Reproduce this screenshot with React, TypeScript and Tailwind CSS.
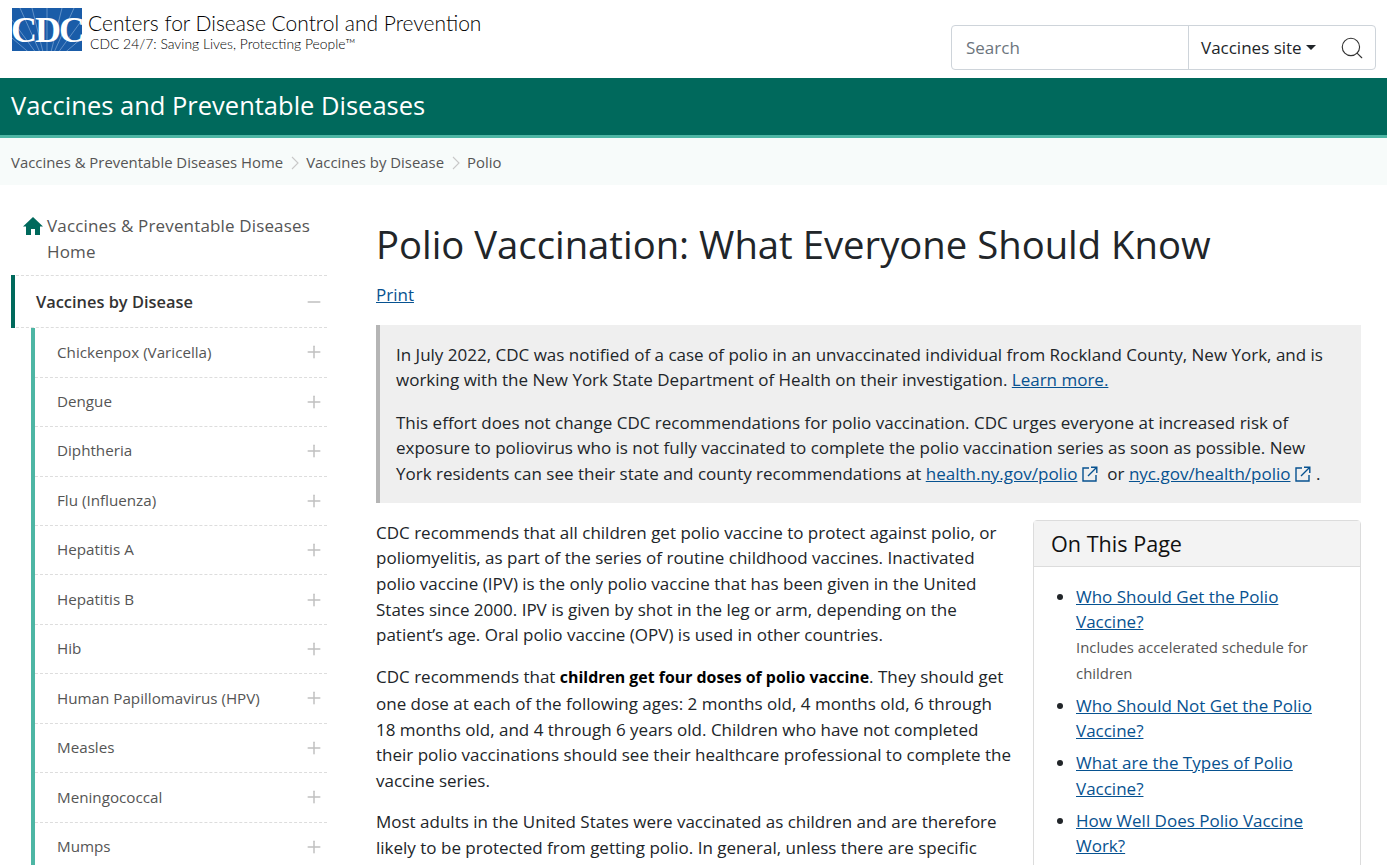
import React from 'react';
import { Search, Plus, Minus } from 'lucide-react';

const diseases = [
  'Chickenpox (Varicella)',
  'Dengue',
  'Diphtheria',
  'Flu (Influenza)',
  'Hepatitis A',
  'Hepatitis B',
  'Hib',
  'Human Papillomavirus (HPV)',
  'Measles',
  'Meningococcal',
  'Mumps',
];

const CdcLogo = () => (
  <div className="relative w-[70px] h-[43px] bg-[#1a5ca8] overflow-hidden shrink-0">
    <svg className="absolute inset-0" width="70" height="43" viewBox="0 0 70 43">
      <g stroke="#7fa8d6" strokeWidth="0.7">
        <path d="M35 60 L0 12 M35 60 L8 0 M35 60 L20 0 M35 60 L35 0 M35 60 L50 0 M35 60 L62 0 M35 60 L70 12 M35 60 L0 30 M35 60 L70 30" />
      </g>
    </svg>
    <span className="absolute inset-0 flex items-center justify-center text-white font-bold text-[36px] tracking-[-2px] font-['Liberation_Serif',serif] leading-none">
      CDC
    </span>
  </div>
);

const Ext = () => (
  <svg className="inline w-[16px] h-[16px] ml-[5px] mb-[3px]" viewBox="0 0 16 16" fill="none" stroke="#075290" strokeWidth="1.4">
    <path d="M7 2 H1 V15 H14 V9" />
    <path d="M6 10 L14.5 1.5 M9 1.2 H14.8 V7" />
  </svg>
);

const Crumb = () => (
  <svg className="w-[8px] h-[14px] mx-[7.5px] shrink-0" viewBox="0 0 8 14" fill="none" stroke="#c8c8c8" strokeWidth="1.1">
    <path d="M1 1 L7 7 L1 13" />
  </svg>
);

const A = ({ children }: { children: React.ReactNode }) => (
  <a className="text-[#075290] underline">{children}</a>
);

export default function App() {
  return (
    <div className="h-[865px] overflow-hidden bg-white font-['Open_Sans',sans-serif] text-[17px] leading-[25.6px] text-[#212529]">
      <header className="h-[78px] flex items-start justify-between pl-3 pr-[11px]">
        <div className="flex items-start gap-[6px] pt-2">
          <CdcLogo />
          <div className="font-['Lato',sans-serif] font-light text-black">
            <div className="text-[21px] leading-[30px] whitespace-nowrap">Centers for Disease Control and Prevention</div>
            <div className="text-[13.9px] leading-[11px] pl-[2px] whitespace-nowrap">CDC 24/7: Saving Lives, Protecting People™</div>
          </div>
        </div>
        <div className="mt-[25px] flex w-[425px] h-[45px] border border-[#ced4da] rounded-[4px]">
          <div className="w-[237px] border-r border-[#ced4da] pl-[14px] flex items-center text-[#6c757d]">Search</div>
          <div className="flex-1 flex items-center pl-3">
            <span>Vaccines site</span>
            <span className="ml-[4px] w-0 h-0 border-x-[5px] border-x-transparent border-t-[5px] border-t-[#212529]" />
            <Search className="ml-auto mr-[10px] w-[26px] h-[26px] text-[#333]" strokeWidth={1.05} />
          </div>
        </div>
      </header>

      <div className="h-[60px] bg-[#00695c] border-b-[3px] border-[#4db6a4] pl-[11px] pb-[1px] flex items-center text-white text-[25.5px]">
        Vaccines and Preventable Diseases
      </div>

      <nav className="h-[47px] bg-[#f7fbfa] pl-[11px] pt-[2px] flex items-center text-[14.9px] text-[#555]">
        <span>Vaccines &amp; Preventable Diseases Home</span>
        <Crumb />
        <span>Vaccines by Disease</span>
        <Crumb />
        <span>Polio</span>
      </nav>

      <div className="flex pl-[11px] pr-[26px] pt-[28px] gap-[49px]">
        <aside className="w-[316px] shrink-0">
          <div className="flex pl-3 pb-[11px] text-[#555] tracking-[0.15px]">
            <svg className="w-[20px] h-[18px] mt-[4px] mr-[4px] shrink-0" viewBox="0 0 20 18" fill="#00695c">
              <path d="M10 0 L20 9.5 L17 9.5 L17 18 L12 18 L12 12 L8 12 L8 18 L3 18 L3 9.5 L0 9.5 Z" />
            </svg>
            <span>Vaccines &amp; Preventable Diseases Home</span>
          </div>
          <div className="h-[53px] border-t border-b border-dashed border-[#ddd] flex items-center justify-between pr-[3px] relative pl-[25px]">
            <span className="absolute left-0 -top-px -bottom-px w-1 bg-[#00695c]" />
            <span className="font-semibold text-[16.4px] text-[#333]">Vaccines by Disease</span>
            <Minus className="w-5 h-5 text-[#c0c0c0]" strokeWidth={1.8} />
          </div>
          <ul className="ml-5 border-l-[4px] border-[#4db6a4]">
            {diseases.map(d => (
              <li key={d} className="h-[49.45px] border-b border-dashed border-[#ddd] flex items-center justify-between pl-[22px] pr-[3px] text-[15.2px] text-[#555]">
                <span>{d}</span>
                <Plus className="w-5 h-5 text-[#c0c0c0]" strokeWidth={1.8} />
              </li>
            ))}
          </ul>
        </aside>

        <main className="flex-1 min-w-0">
          <h1 className="text-[38.25px] leading-[43px] text-[#212529] mt-[10px] whitespace-nowrap">Polio Vaccination: What Everyone Should Know</h1>
          <p className="mt-[16px]"><A>Print</A></p>

          <div className="mt-[17px] bg-[#efefef] border-l-[4px] border-[#b5b5b5] pl-4 pr-4 pt-[17px] pb-[16px]">
            <p>
              In July 2022, CDC was notified of a case of polio in an unvaccinated individual from Rockland County, New York, and is working with the New York State Department of Health on their investigation. <A>Learn more.</A>
            </p>
            <p className="mt-[17px]">
              This effort does not change CDC recommendations for polio vaccination. CDC urges everyone at increased risk of exposure to poliovirus who is not fully vaccinated to complete the polio vaccination series as soon as possible. New York residents can see their state and county recommendations at <A>health.ny.gov/polio</A><Ext /> &nbsp;or <A>nyc.gov/health/polio</A><Ext /> .
            </p>
          </div>

          <div className="flow-root mt-[17.3px]">
            <div className="float-right ml-5 w-[328px] border border-[#dcdcdc] rounded-[4px] mb-4">
              <div className="h-[46px] bg-[#f3f3f3] border-b border-[#dcdcdc] pl-[17px] pt-[1px] flex items-center text-[21.6px] text-[#111]">On This Page</div>
              <ul className="list-disc pl-[42px] pr-4 pt-[17px] pb-[40px] space-y-[6.4px]">
                <li>
                  <A>Who Should Get the Polio Vaccine?</A>
                  <div className="text-[14.9px] text-[#555]">Includes accelerated schedule for children</div>
                </li>
                <li><A>Who Should Not Get the Polio Vaccine?</A></li>
                <li><A>What are the Types of Polio Vaccine?</A></li>
                <li><A>How Well Does Polio Vaccine Work?</A></li>
              </ul>
            </div>
            <p>
              CDC recommends that all children get polio vaccine to protect against polio, or poliomyelitis, as part of the series of routine childhood vaccines. Inactivated polio vaccine (IPV) is the only polio vaccine that has been given in the United States since 2000. IPV is given by shot in the leg or arm, depending on the patient’s age. Oral polio vaccine (OPV) is used in other countries.
            </p>
            <p className="mt-[16.5px]">
              CDC recommends that <strong className="font-bold text-[15.9px] text-black">children get four doses of polio vaccine</strong>. They should get one dose at each of the following ages: 2 months old, 4 months old, 6 through 18 months old, and 4 through 6 years old. Children who have not completed their polio vaccinations should see their healthcare professional to complete the vaccine series.
            </p>
            <p className="mt-[16px]">
              Most adults in the United States were vaccinated as children and are therefore likely to be protected from getting polio. In general, unless there are specific
            </p>
          </div>
        </main>
      </div>
    </div>
  );
}
